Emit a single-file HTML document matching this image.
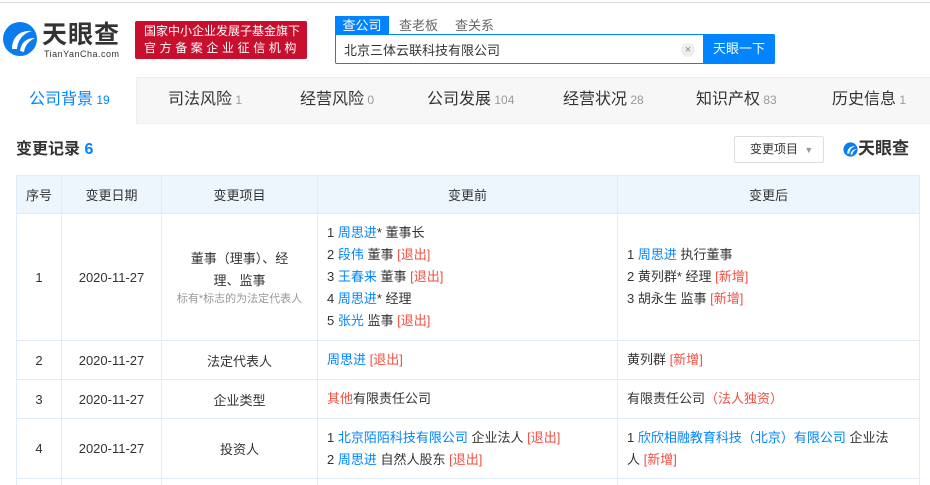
<!DOCTYPE html>
<html><head><meta charset="utf-8"><style>
*{margin:0;padding:0;box-sizing:border-box}
html,body{width:930px;height:485px;overflow:hidden}
body{background:#fff;font-family:"Liberation Sans","Noto Sans CJK SC",sans-serif;color:#333;position:relative}
.a{position:absolute}
.blue{color:#0084ff}.red{color:#f04f43}
table{position:absolute;left:16px;top:175px;border-collapse:collapse;font-size:13px;width:904px}
td,th{border:1px solid #e0ecf7;text-align:center;vertical-align:middle}
th{background:#eef6fd;font-weight:normal;height:38px;color:#333}
td.l{text-align:left;padding-left:9px;line-height:22px}
</style></head><body>
<div class="a" style="left:0;top:2px;width:930px;height:1px;background:#ddd"></div>
<svg class="a" style="left:2px;top:21px" width="36" height="36" viewBox="0 0 36 36">
<circle cx="18" cy="18" r="17" fill="#0a7cf0"/>
<path d="M10 28 C10 16 18 9 30 10 C22 12 16 18 15 28 Z" fill="#fff"/>
<path d="M18 30 C19 22 24 17 33 17 C27 20 23 24 22 31 Z" fill="#fff"/>
</svg>
<div class="a" style="left:42px;top:21px;font-size:25px;font-weight:bold;color:#333;letter-spacing:1px;line-height:28px">天眼查</div>
<div class="a" style="left:44px;top:49px;font-size:9px;color:#333;letter-spacing:0.5px">TianYanCha.com</div>
<div class="a" style="left:135px;top:21px;width:172px;height:38px;background:#c8102e;border-radius:2px;color:#fff;font-size:12px;line-height:17px;padding:2px 0 0 9px;white-space:nowrap;overflow:hidden">国家中小企业发展子基金旗下<br><span style="letter-spacing:3.6px">官方备案企业征信机构</span></div>
<div class="a" style="left:335px;top:16px;width:54px;height:19px;background:#0084ff;color:#fff;font-size:13px;text-align:center;line-height:19px">查公司</div>
<div class="a" style="left:399px;top:16px;font-size:13px;color:#666;line-height:19px">查老板</div>
<div class="a" style="left:455px;top:16px;font-size:13px;color:#666;line-height:19px">查关系</div>
<div class="a" style="left:335px;top:34px;width:440px;height:30px;border:1px solid #0084ff;border-radius:0 2px 2px 2px"></div>
<div class="a" style="left:344px;top:40px;font-size:13px;color:#333">北京三体云联科技有限公司</div>
<div class="a" style="left:681px;top:43px;width:14px;height:14px;border-radius:7px;background:#eee;color:#888;font-size:11px;text-align:center;line-height:14px">×</div>
<div class="a" style="left:703px;top:34px;width:72px;height:30px;background:#0084ff;color:#fff;font-size:13px;text-align:center;line-height:30px;border-radius:0 2px 2px 0">天眼一下</div>
<div class="a" style="left:0;top:77px;width:930px;height:47px;background:#f7f7f7;border-top:1px solid #eee;border-bottom:1px solid #eee"></div>
<div class="a" style="left:0;top:77px;width:137px;height:47px;background:#fff;border-right:1px solid #eee"></div>
<div class="a" style="top:89px;left:0;width:930px;font-size:16px;line-height:22px">
<span class="a" style="left:29px;color:#0084ff">公司背景<small style="font-size:12px"> 19</small></span>
<span class="a" style="left:168px">司法风险<small style="font-size:12px;color:#999"> 1</small></span>
<span class="a" style="left:300px">经营风险<small style="font-size:12px;color:#999"> 0</small></span>
<span class="a" style="left:427px">公司发展<small style="font-size:12px;color:#999"> 104</small></span>
<span class="a" style="left:563px">经营状况<small style="font-size:12px;color:#999"> 28</small></span>
<span class="a" style="left:696px">知识产权<small style="font-size:12px;color:#999"> 83</small></span>
<span class="a" style="left:832px">历史信息<small style="font-size:12px;color:#999"> 1</small></span>
</div>
<div class="a" style="left:16px;top:139px;font-size:16px;font-weight:bold;line-height:22px">变更记录 <span class="blue">6</span></div>
<div class="a" style="left:734px;top:136px;width:90px;height:27px;border:1px solid #ddd;border-radius:2px;font-size:12px;line-height:25px;padding-left:15px">变更项目 <span style="color:#999;font-size:9px;margin-left:3px">▼</span></div>
<svg class="a" style="left:843px;top:142px" width="15" height="15" viewBox="0 0 36 36"><circle cx="18" cy="18" r="17" fill="#0a7cf0"/><path d="M10 28 C10 16 18 9 30 10 C22 12 16 18 15 28 Z" fill="#fff"/><path d="M18 30 C19 22 24 17 33 17 C27 20 23 24 22 31 Z" fill="#fff"/></svg>
<div class="a" style="left:858px;top:138px;font-size:17px;font-weight:bold;line-height:22px">天眼查</div>
<table>
<tr><th style="width:45px">序号</th><th style="width:100px">变更日期</th><th style="width:156px">变更项目</th><th style="width:300px">变更前</th><th>变更后</th></tr>
<tr style="height:127px"><td>1</td><td>2020-11-27</td><td style="line-height:22px">董事（理事）、经<br>理、监事<br><span style="font-size:11px;color:#999;line-height:14px;display:block">标有*标志的为法定代表人</span></td>
<td class="l">1 <span class="blue">周思进</span>* 董事长<br>2 <span class="blue">段伟</span> 董事 <span class="red">[退出]</span><br>3 <span class="blue">王春来</span> 董事 <span class="red">[退出]</span><br>4 <span class="blue">周思进</span>* 经理<br>5 <span class="blue">张光</span> 监事 <span class="red">[退出]</span></td>
<td class="l">1 <span class="blue">周思进</span> 执行董事<br>2 黄列群* 经理 <span class="red">[新增]</span><br>3 胡永生 监事 <span class="red">[新增]</span></td></tr>
<tr style="height:39px"><td>2</td><td>2020-11-27</td><td>法定代表人</td><td class="l"><span class="blue">周思进</span> <span class="red">[退出]</span></td><td class="l">黄列群 <span class="red">[新增]</span></td></tr>
<tr style="height:39px"><td>3</td><td>2020-11-27</td><td>企业类型</td><td class="l"><span class="red">其他</span>有限责任公司</td><td class="l">有限责任公司<span class="red">（法人独资）</span></td></tr>
<tr style="height:60px"><td>4</td><td>2020-11-27</td><td>投资人</td><td class="l">1 <span class="blue">北京陌陌科技有限公司</span> 企业法人 <span class="red">[退出]</span><br>2 <span class="blue">周思进</span> 自然人股东 <span class="red">[退出]</span></td><td class="l">1 <span class="blue">欣欣相融教育科技（北京）有限公司</span> 企业法<br>人 <span class="red">[新增]</span></td></tr>
<tr style="height:30px"><td></td><td></td><td></td><td></td><td></td></tr>
</table>
</body></html>
